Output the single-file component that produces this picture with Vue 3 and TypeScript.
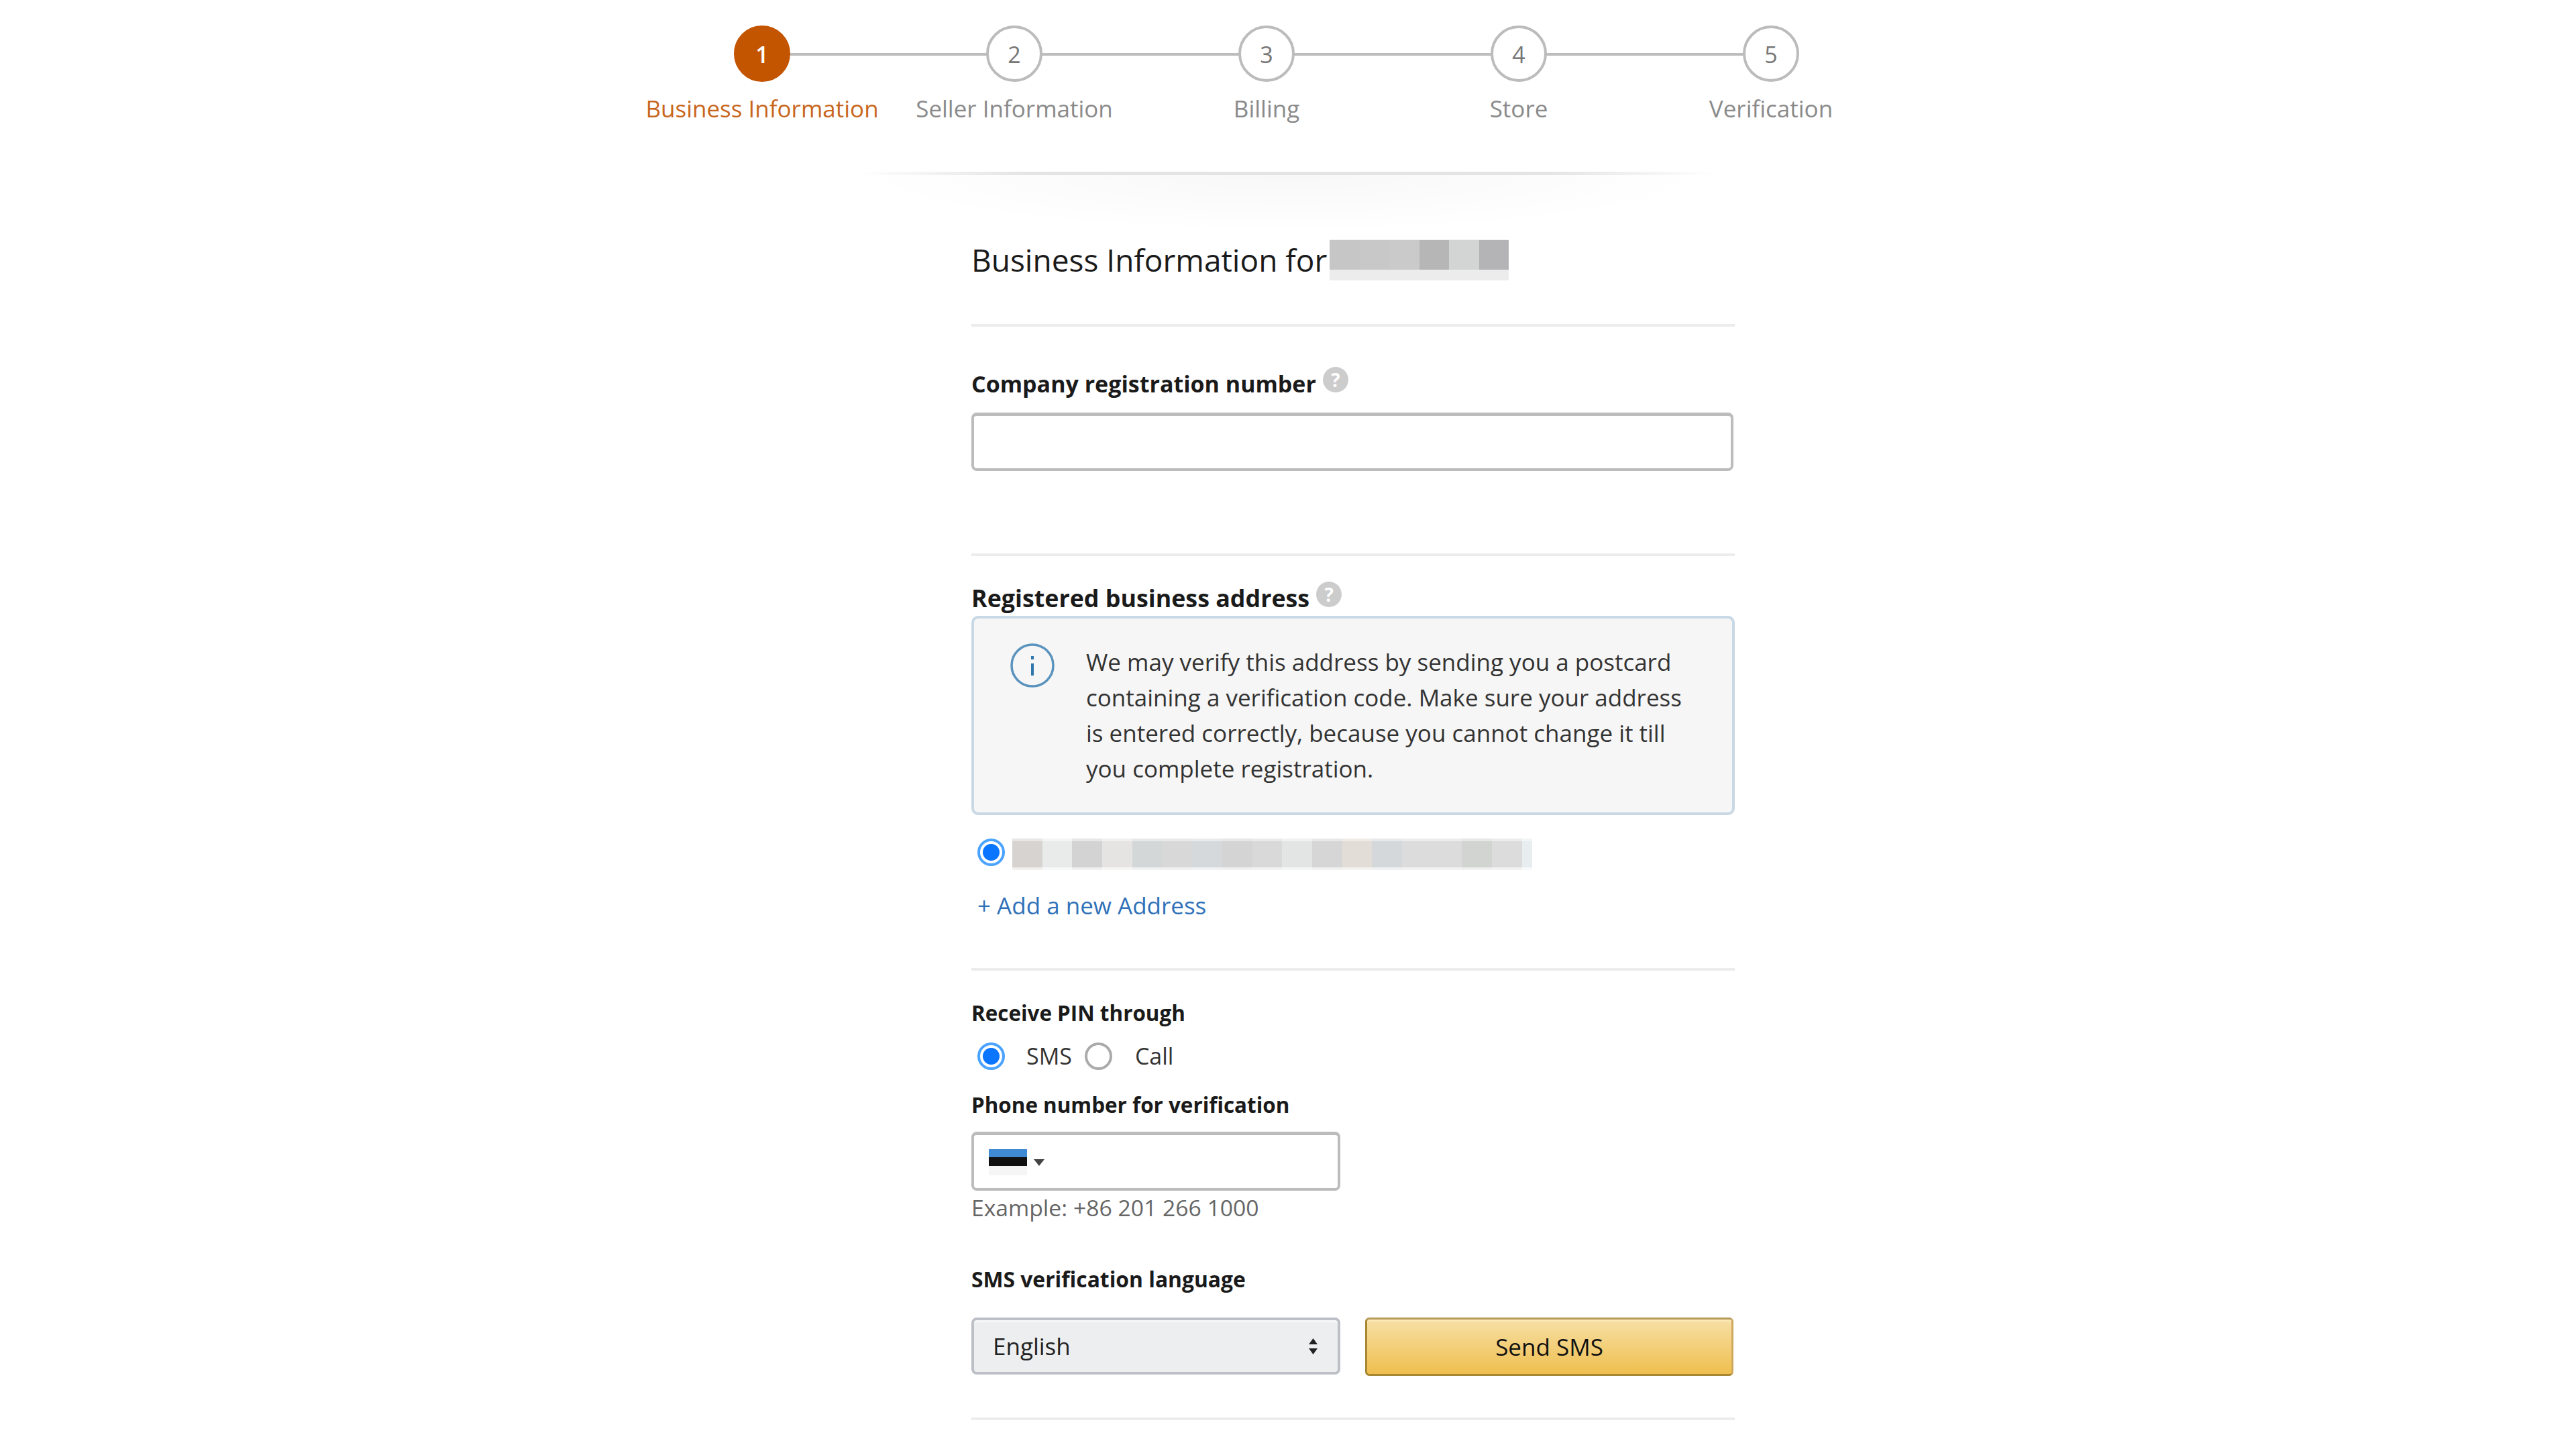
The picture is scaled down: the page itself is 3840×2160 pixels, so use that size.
<script setup lang="ts">
const steps = [
  { n: 1, label: 'Business Information' },
  { n: 2, label: 'Seller Information' },
  { n: 3, label: 'Billing' },
  { n: 4, label: 'Store' },
  { n: 5, label: 'Verification' },
]
const nameBlocks = ['#c6c6c6', '#c8c8c8', '#cacaca', '#b6b6b6', '#d3d5d4', '#b4b4b6']
const addressBlocks = [
  '#d6d3d0', '#e9ebeb', '#d3d3d3', '#e6e4e2', '#d4d7d8', '#d8d8d8', '#d5d9dc', '#d4d4d4', '#d9d9d9',
  '#e3e5e5', '#d6d6d6', '#e2ddd6', '#d4d8da', '#dddcdc', '#dcdcdc', '#d2d4d2', '#dcdcdc',
]
</script>

<template>
  <div class="page">
    <div class="stepper">
      <div v-for="s in steps" :key="s.n" class="step" :class="{ active: s.n === 1, last: s.n === 5 }">
        <div class="track"><span class="circle">{{ s.n }}</span></div>
        <div class="step-label">{{ s.label }}</div>
      </div>
    </div>
    <div class="shadow"></div>

    <main class="form">
      <h1 class="title">
        <span>Business Information for</span>
        <span class="blur name">
          <i v-for="(c, i) in nameBlocks" :key="i" :style="{ background: c }"></i>
        </span>
      </h1>
      <hr class="rule first" />

      <label class="label company">Company registration number<span class="help">?</span></label>
      <div class="input wide"></div>
      <hr class="rule second" />

      <label class="label address">Registered business address<span class="help">?</span></label>
      <div class="notice">
        <svg class="info" viewBox="0 0 66 66" width="66" height="66" aria-hidden="true">
          <circle cx="33" cy="33" r="31" fill="none" stroke="#5a93bd" stroke-width="3.5" />
          <rect x="31" y="30" width="4" height="18" fill="#2f76ad" />
          <rect x="31" y="19" width="4" height="5" fill="#2f76ad" />
        </svg>
        <p>We may verify this address by sending you a postcard containing a verification code. Make sure your address is entered correctly, because you cannot change it till you complete registration.</p>
      </div>

      <div class="address-row">
        <span class="radio on"></span>
        <span class="blur addr">
          <i v-for="(c, i) in addressBlocks" :key="i" :style="{ background: c }"></i>
          <i class="tail"></i>
        </span>
      </div>
      <a class="add-link">+ Add a new Address</a>
      <hr class="rule third" />

      <label class="label small pin">Receive PIN through</label>
      <div class="radios">
        <span class="radio on"></span><span class="opt sms">SMS</span>
        <span class="radio"></span><span class="opt call">Call</span>
      </div>
      <label class="label small phone">Phone number for verification</label>
      <div class="input narrow">
        <span class="flag"><i class="f1"></i><i class="f2"></i><i class="f3"></i></span>
        <span class="caret"></span>
      </div>
      <div class="example">Example: +86 201 266 1000</div>

      <label class="label small lang">SMS verification language</label>
      <div class="actions">
        <div class="select">
          <span>English</span>
          <svg viewBox="0 0 17 28" width="17" height="28" aria-hidden="true">
            <path d="M8.5 2 15 11H2Z M8.5 26 2 17H15Z" fill="#222" />
          </svg>
        </div>
        <button class="send" type="button">Send SMS</button>
      </div>
      <hr class="rule fourth" />
    </main>
  </div>
</template>

<style>
html, body { margin: 0; background: #fff; }
</style>

<style scoped>
.page {
  width: 3840px;
  height: 2160px;
  overflow: hidden;
  background: #fff;
  color: #111;
  font-family: "Open Sans", "Liberation Sans", sans-serif;
}
.stepper { display: flex; margin-left: 948px; padding-top: 38px; }
.step { width: 376px; display: flex; flex-direction: column; align-items: center; }
.track { position: relative; width: 100%; height: 84px; display: flex; justify-content: center; }
.track::after {
  content: "";
  position: absolute;
  left: 50%;
  width: 100%;
  top: 41px;
  height: 4px;
  background: #bdbdbd;
}
.step.last .track::after { display: none; }
.circle {
  position: relative;
  z-index: 1;
  box-sizing: border-box;
  width: 84px;
  height: 84px;
  padding-top: 2px;
  border: 4px solid #bcbcbc;
  border-radius: 50%;
  background: #fff;
  color: #777;
  font-size: 34px;
  display: flex;
  align-items: center;
  justify-content: center;
}
.step.active .circle { background: #c45500; border-color: #c45500; color: #fff; font-weight: 600; }
.step-label { margin-top: 15px; font-size: 35px; line-height: 50px; color: #8a8a8a; white-space: nowrap; }
.step.active .step-label { color: #c8661c; }
.shadow {
  height: 90px;
  margin: 69px 0 0 1278px;
  width: 1280px;
  background:
    linear-gradient(90deg, transparent, #e4e4e4 20%, #e4e4e4 80%, transparent) top / 100% 5px no-repeat,
    radial-gradient(ellipse 50% 100% at 50% 0, rgba(0,0,0,.03), transparent);
}
.form { margin-left: 1448px; width: 1138px; }
.title {
  display: flex;
  margin: 10px 0 0;
  height: 62px;
  font-size: 46px;
  line-height: 62px;
  font-weight: 400;
  color: #1a1a1a;
}
.blur { display: flex; }
.blur i { display: block; }
.name { margin-left: 4px; height: 62px; background: #f6f6f6; padding-top: 2px; box-sizing: border-box; }
.name i {
  width: 44.5px;
  height: 100%;
  box-shadow: inset 0 -16px 0 #ececec;
}
.rule { margin: 0; border: 0; height: 4px; background: #ececec; }
.rule.first { margin-top: 65px; }
.label { display: block; font-weight: 700; font-size: 35px; line-height: 50px; color: #1a1a1a; }
.label.small { font-size: 31.4px; line-height: 44px; }
.company { margin-top: 60px; font-size: 34px; }
.help {
  display: inline-flex;
  vertical-align: 8px;
  width: 38px;
  height: 38px;
  margin-left: 10px;
  border-radius: 50%;
  background: #ccc;
  color: #fff;
  font-size: 28px;
  line-height: 38px;
  justify-content: center;
}
.input { box-sizing: border-box; border: 4px solid #bcbcbc; border-top-width: 5px; border-radius: 8px; background: #fff; }
.input.wide { margin-top: 18px; height: 87px; width: 1136px; }
.rule.second { margin-top: 123px; }
.address { margin-top: 37px; font-size: 35.8px; }
.notice {
  box-sizing: border-box;
  display: flex;
  margin-top: 2px;
  height: 297px;
  padding: 37px 30px 0 54px;
  border: 4px solid #c8d8e4;
  border-radius: 10px;
  background: #f6f6f6;
}
.info { flex: none; margin-right: 47px; }
.notice p { width: 900px; margin: 1px 0 0; font-size: 35px; line-height: 53px; color: #333; }
.address-row { display: flex; align-items: flex-start; margin-top: 35px; padding-left: 9px; }
.radio {
  box-sizing: border-box;
  flex: none;
  display: block;
  width: 41px;
  height: 41px;
  border: 4px solid #aaa;
  border-radius: 50%;
  background: #fff;
}
.radio.on { border-color: #4ba3ff; background: radial-gradient(circle, #0a75ff 0 12px, #fff 13px); }
.addr { height: 47px; margin-left: 11px; }
.addr i {
  width: 44.7px;
  height: 100%;
  box-shadow: inset 0 4px 0 rgba(255,255,255,.45), inset 0 -4px 0 rgba(255,255,255,.65);
}
.addr .tail { width: 15px; background: #e8edf0; }
.add-link { display: block; margin: 28px 0 0 9px; font-size: 35px; line-height: 50px; color: #2f71b8; }
.rule.third { margin-top: 68px; }
.pin { margin-top: 41px; }
.radios { display: flex; align-items: center; height: 41px; margin-top: 22px; padding-left: 9px; }
.opt { font-size: 34px; line-height: 41px; color: #333; }
.sms { margin: 0 19px 0 32px; }
.call { margin-left: 34px; }
.phone { margin-top: 30px; }
.input.narrow {
  display: flex;
  align-items: flex-start;
  width: 550px;
  height: 88px;
  margin-top: 18px;
  padding: 21px 0 0 22px;
}
.flag { display: flex; flex-direction: column; width: 57px; height: 39px; }
.flag i { display: block; }
.f1 { height: 12px; background: #3f8ad3; }
.f2 { height: 13px; background: #111; }
.f3 { height: 14px; background: #f6f6f6; }
.caret {
  margin: 15px 0 0 10px;
  border-left: 8px solid transparent;
  border-right: 8px solid transparent;
  border-top: 10px solid #444;
}
.example { margin-top: 3px; font-size: 33.7px; line-height: 44px; color: #666; }
.label.small.lang { margin-top: 63px; font-size: 31.8px; }
.actions { display: flex; gap: 37px; margin-top: 35px; }
.select {
  box-sizing: border-box;
  display: flex;
  align-items: center;
  justify-content: space-between;
  width: 550px;
  height: 85px;
  padding: 0 28px;
  border: 4px solid #bcc0c6;
  border-radius: 8px;
  background: #eceef0;
  box-shadow: inset 0 3px 0 #f6f7f8;
  font-size: 35px;
  color: #222;
}
.send {
  box-sizing: border-box;
  width: 549px;
  height: 87px;
  padding: 0;
  border: 3px solid #a88734;
  border-top-color: #b59a5a;
  border-right-color: #cfa85f;
  border-radius: 6px;
  background: linear-gradient(#f7dfa5, #efbf4e);
  box-shadow: inset 0 3px 0 #fbe9b5;
  font: inherit;
  font-size: 35px;
  color: #111;
}
.rule.fourth { margin-top: 62px; }
</style>
